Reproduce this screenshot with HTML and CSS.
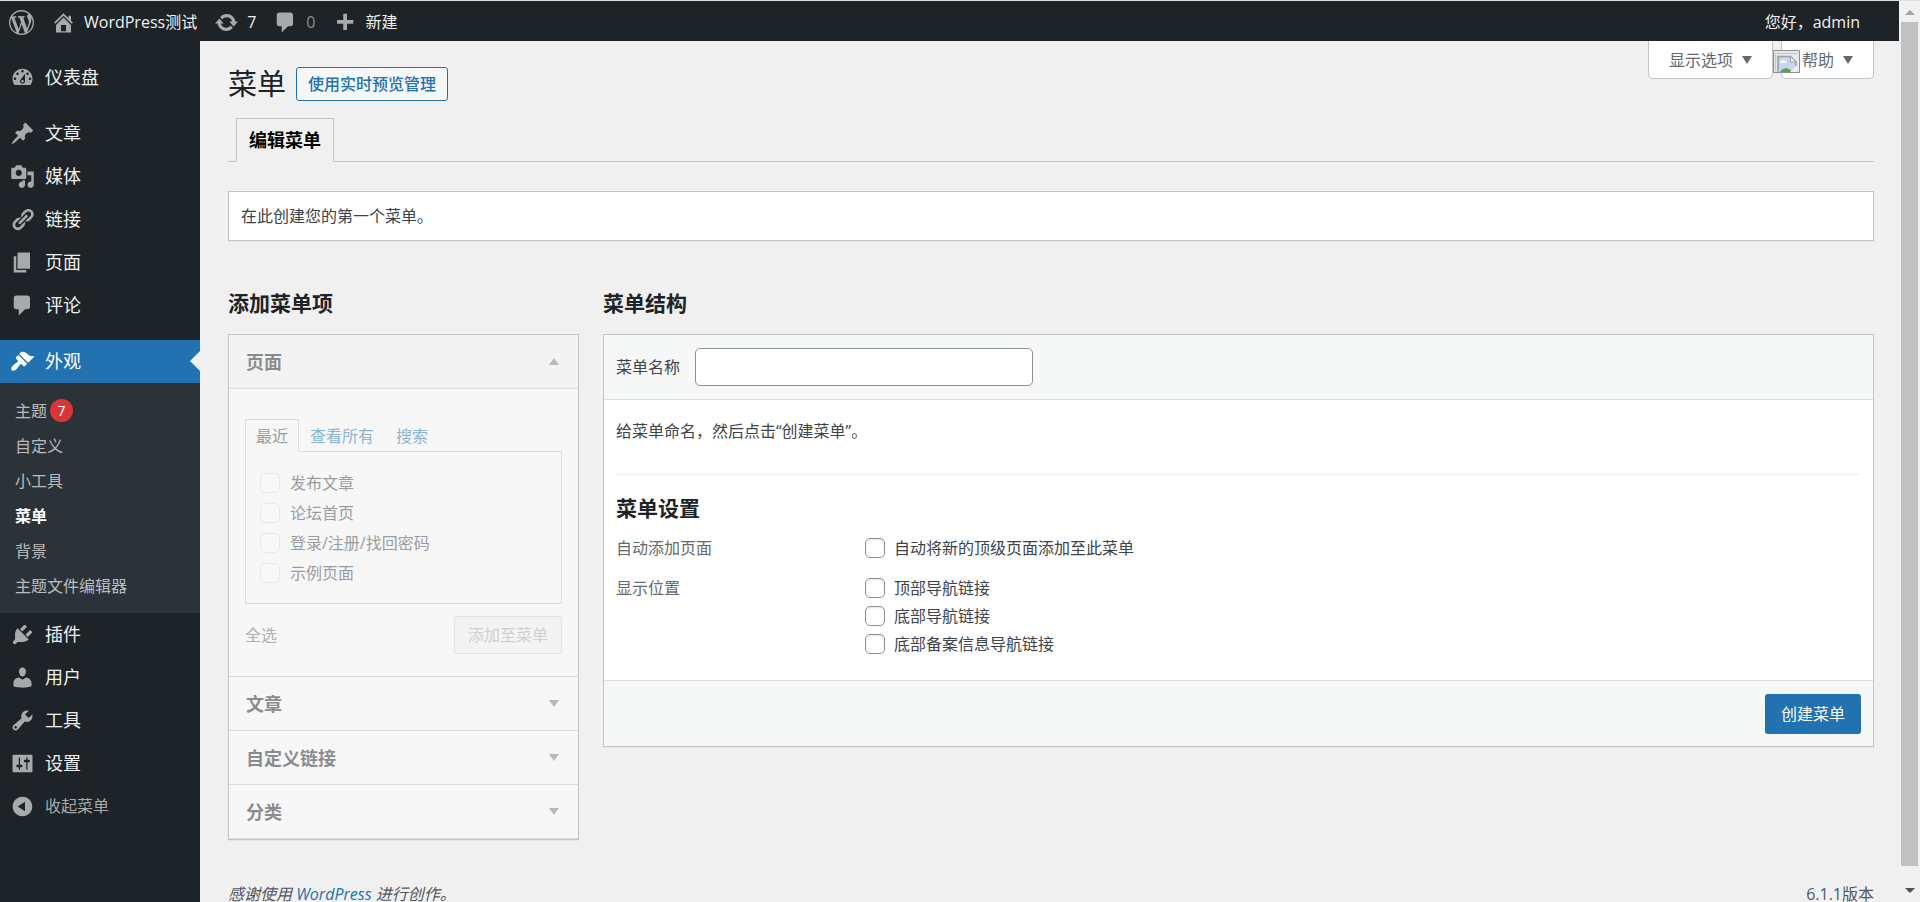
FILE: index.html
```html
<!DOCTYPE html>
<html lang="zh-CN">
  <head>
    <meta charset="UTF-8" />
    <meta name="viewport" content="width=device-width, initial-scale=1.0" />
    <title>菜单 ‹ WordPress测试 — WordPress</title>
    <link rel="stylesheet" href="styles.css">
  </head>
  <body>
    <div class="screen">
      <div class="app">
        <header class="adminbar">
          <a class="bar-logo" href="#" aria-label="WordPress">
            <svg viewBox="0 0 20 20"><path d="M20 10c0-5.51-4.49-10-10-10C4.48 0 0 4.49 0 10c0 5.52 4.48 10 10 10 5.51 0 10-4.48 10-10zM7.78 15.37L4.37 6.22c.55-.02 1.17-.08 1.17-.08.5-.06.44-1.13-.06-1.11 0 0-1.45.11-2.37.11-.18 0-.37 0-.58-.01C4.12 2.69 6.87 1.11 10 1.11c2.33 0 4.45.87 6.05 2.34-.68-.11-1.65.39-1.65 1.58 0 .74.45 1.36.9 2.1.35.61.55 1.36.55 2.46 0 1.49-1.4 5-1.4 5l-3.03-8.37c.54-.02.82-.17.82-.17.5-.05.44-1.25-.06-1.22 0 0-1.44.12-2.38.12-.87 0-2.33-.12-2.33-.12-.5-.03-.56 1.2-.06 1.22l.92.08 1.26 3.41zM17.41 10c.24-.64.74-1.87.43-4.25.7 1.29 1.05 2.71 1.05 4.25 0 3.29-1.73 6.24-4.4 7.78.97-2.59 1.94-5.2 2.92-7.78zM6.1 18.09C3.12 16.65 1.11 13.53 1.11 10c0-1.3.23-2.48.72-3.59C3.25 10.3 4.67 14.2 6.1 18.09zm4.03-6.63l2.58 6.98c-.86.29-1.76.45-2.71.45-.79 0-1.57-.11-2.29-.33.81-2.38 1.62-4.74 2.42-7.1z"/></svg>
          </a>
          <a href="#">
            <svg viewBox="0 0 20 20"><path d="M16 8.5l1.53 1.53-1.06 1.06L10 4.6l-6.47 6.49-1.06-1.06L10 2.5l4 4v-2h2v4zm-6-2.46l6 5.99V18H4v-5.97zM12 17v-5H8v5h4z"/></svg>
            <span>WordPress测试</span>
          </a>
          <a href="#">
            <svg viewBox="0 0 20 20"><path d="M10.2 3.28c3.53 0 6.43 2.61 6.92 6h2.08l-3.5 4-3.5-4h2.32c-.45-1.97-2.21-3.45-4.32-3.45-1.45 0-2.73.71-3.54 1.78L4.95 5.66C6.23 4.2 8.11 3.28 10.2 3.28zm-.4 13.44c-3.52 0-6.43-2.61-6.92-6H.8l3.5-4c1.17 1.33 2.33 2.67 3.5 4H5.48c.45 1.97 2.21 3.45 4.32 3.45 1.45 0 2.73-.71 3.54-1.78l1.71 1.95c-1.28 1.46-3.15 2.38-5.25 2.38z"/></svg>
            <span>7</span>
          </a>
          <a class="muted" href="#">
            <svg viewBox="0 0 20 20"><path d="M5 2h9c1.1 0 2 .9 2 2v7c0 1.1-.9 2-2 2h-2l-5 5v-5H5c-1.1 0-2-.9-2-2V4c0-1.1.9-2 2-2z"/></svg>
            <span>0</span>
          </a>
          <a href="#">
            <svg viewBox="0 0 20 20"><path d="M17 8v3h-5v5H9v-5H4V8h5V3h3v5h5z"/></svg>
            <span>新建</span>
          </a>
          <a class="account" href="#">您好，admin</a>
        </header>

        <div class="columns">
          <nav class="sidebar">
            <ul class="menu">
              <li>
                <a href="#"><svg viewBox="0 0 20 20"><path d="M3.76 16h12.48c1.1-1.37 1.76-3.11 1.76-5 0-4.42-3.58-8-8-8s-8 3.58-8 8c0 1.89.66 3.63 1.76 5zM10 4c.55 0 1 .45 1 1s-.45 1-1 1-1-.45-1-1 .45-1 1-1zM6 6c.55 0 1 .45 1 1s-.45 1-1 1-1-.45-1-1 .45-1 1-1zm8 0c.55 0 1 .45 1 1s-.45 1-1 1-1-.45-1-1 .45-1 1-1zm-5.37 5.55L12 7v6c0 1.1-.9 2-2 2s-2-.9-2-2c0-.57.24-1.08.63-1.45zM4 10c.55 0 1 .45 1 1s-.45 1-1 1-1-.45-1-1 .45-1 1-1zm12 0c.55 0 1 .45 1 1s-.45 1-1 1-1-.45-1-1 .45-1 1-1zm-5 3c0-.55-.45-1-1-1s-1 .45-1 1 .45 1 1 1 1-.45 1-1z"/></svg>仪表盘</a>
              </li>
              <li class="group">
                <a href="#"><svg viewBox="0 0 20 20"><path d="M10.44 3.02l1.82-1.82 6.36 6.35-1.83 1.82c-1.05-.68-2.48-.57-3.41.36l-.75.75c-.92.93-1.04 2.35-.35 3.41l-1.83 1.82-2.41-2.41-2.8 2.79c-.42.42-3.38 2.71-3.8 2.29s1.86-3.39 2.28-3.81l2.79-2.79L4.1 9.36l1.83-1.82c1.05.69 2.48.57 3.4-.36l.75-.75c.93-.92 1.05-2.35.36-3.41z"/></svg>文章</a>
              </li>
              <li>
                <a href="#"><svg viewBox="0 0 20 20"><path d="M13 11V4c0-.55-.45-1-1-1h-1.67L9 1H5L3.67 3H2c-.55 0-1 .45-1 1v7c0 .55.45 1 1 1h10c.55 0 1-.45 1-1zM7 4.5c1.38 0 2.5 1.12 2.5 2.5S8.38 9.5 7 9.5 4.5 8.38 4.5 7 5.62 4.5 7 4.5zM14 6h5v10.5c0 1.38-1.12 2.5-2.5 2.5S14 17.88 14 16.5s1.12-2.5 2.5-2.5c.17 0 .34.02.5.05V9h-3V6zm-4 8.05V13h2v3.5c0 1.38-1.12 2.5-2.5 2.5S7 17.88 7 16.5 8.12 14 9.5 14c.17 0 .34.02.5.05z"/></svg>媒体</a>
              </li>
              <li>
                <a href="#"><svg viewBox="0 0 20 20"><path d="M17.74 2.76c1.68 1.69 1.68 4.41 0 6.1l-1.53 1.52c-1.12 1.12-2.7 1.47-4.14 1.09l2.62-2.61.76-.77.76-.76c.84-.84.84-2.2 0-3.04-.84-.85-2.2-.85-3.04 0l-.77.76-3.38 3.38c-.37-1.44-.02-3.02 1.1-4.14l1.52-1.53c1.69-1.68 4.42-1.68 6.1 0zM8.59 13.43l5.34-5.34c.42-.42.42-1.1 0-1.52-.44-.43-1.13-.39-1.53 0l-5.33 5.34c-.42.42-.42 1.1 0 1.52.44.43 1.13.39 1.52 0zm-.76 2.29l4.14-4.15c.38 1.44.03 3.02-1.09 4.14l-1.52 1.53c-1.69 1.68-4.41 1.68-6.1 0-1.68-1.68-1.68-4.42 0-6.1l1.53-1.52c1.12-1.12 2.7-1.47 4.14-1.1l-4.14 4.15c-.85.84-.85 2.2 0 3.05.84.84 2.2.84 3.04 0z"/></svg>链接</a>
              </li>
              <li>
                <a href="#"><svg viewBox="0 0 20 20"><path d="M6 15V2h10v13H6zm-1 1h8v2H3V5h2v11z"/></svg>页面</a>
              </li>
              <li>
                <a href="#"><svg viewBox="0 0 20 20"><path d="M5 2h9c1.1 0 2 .9 2 2v7c0 1.1-.9 2-2 2h-2l-5 5v-5H5c-1.1 0-2-.9-2-2V4c0-1.1.9-2 2-2z"/></svg>评论</a>
              </li>
              <li class="group current">
                <a href="#"><svg viewBox="0 0 20 20"><path d="M14.48 11.06L7.41 3.99l1.5-1.5c.5-.56 2.3-.47 3.51.32 1.21.8 1.43 1.28 2.91 2.1 1.18.64 2.45 1.26 4.45.85zm-.71.71L6.7 4.7 4.93 6.47c-.39.39-.39 1.02 0 1.41l1.06 1.06c.39.39.39 1.03 0 1.42-.6.6-1.43 1.11-2.21 1.69-.35.26-.7.53-1.01.84C1.43 14.23.4 16.08 1.4 17.07c.99 1 2.84-.03 4.18-1.36.31-.31.58-.66.85-1.02.57-.78 1.08-1.61 1.69-2.21.39-.39 1.02-.39 1.41 0l1.06 1.06c.39.39 1.02.39 1.41 0z"/></svg>外观</a>
                <ul class="submenu">
                  <li><a href="#">主题 <span class="count">7</span></a></li>
                  <li><a href="#">自定义</a></li>
                  <li><a href="#">小工具</a></li>
                  <li><a class="active" href="#">菜单</a></li>
                  <li><a href="#">背景</a></li>
                  <li><a href="#">主题文件编辑器</a></li>
                </ul>
              </li>
              <li>
                <a href="#"><svg viewBox="0 0 20 20"><path d="M13.11 4.36L9.87 7.6 8 5.73l3.24-3.24c.35-.34 1.05-.2 1.56.32.52.51.66 1.21.31 1.55zm-8 1.77l.91-1.12 9.01 9.01-1.19.84c-.71.71-2.63 1.16-3.82 1.16H6.14L4.9 17.26c-.59.59-1.54.59-2.12 0-.59-.58-.59-1.53 0-2.12l1.24-1.24v-3.88c0-1.13.4-3.19 1.09-3.89zm7.26 3.97l3.24-3.24c.34-.35 1.04-.21 1.55.31.52.51.66 1.21.31 1.55l-3.24 3.25z"/></svg>插件</a>
              </li>
              <li>
                <a href="#"><svg viewBox="0 0 20 20"><path d="M10 9.25c-2.27 0-2.73-3.44-2.73-3.44C7 4.02 7.82 2 9.97 2c2.16 0 2.98 2.02 2.71 3.81 0 0-.41 3.44-2.68 3.44zm0 2.57L12.72 10c2.39 0 4.52 2.33 4.52 4.53v2.49s-3.65 1.13-7.24 1.13c-3.65 0-7.24-1.13-7.24-1.13v-2.49c0-2.25 1.94-4.48 4.47-4.48z"/></svg>用户</a>
              </li>
              <li>
                <a href="#"><svg viewBox="0 0 20 20"><path d="M16.68 9.77c-1.34 1.34-3.3 1.67-4.95.99l-5.41 6.52c-.99.99-2.59.99-3.58 0s-.99-2.59 0-3.57l6.52-5.42c-.68-1.65-.35-3.61.99-4.95 1.28-1.28 3.12-1.62 4.72-1.06l-2.89 2.89 2.82 2.82 2.86-2.87c.53 1.58.18 3.39-1.08 4.65zM3.81 16.21c.4.39 1.04.39 1.43 0 .4-.4.4-1.04 0-1.43-.39-.4-1.03-.4-1.43 0-.39.39-.39 1.03 0 1.43z"/></svg>工具</a>
              </li>
              <li>
                <a href="#"><svg viewBox="0 0 20 20"><path d="M18 16V4c0-.55-.45-1-1-1H3c-.55 0-1 .45-1 1v12c0 .55.45 1 1 1h14c.55 0 1-.45 1-1zM8 11h1c.55 0 1 .45 1 1s-.45 1-1 1H8v1.5c0 .28-.22.5-.5.5s-.5-.22-.5-.5V13H6c-.55 0-1-.45-1-1s.45-1 1-1h1V5.5c0-.28.22-.5.5-.5s.5.22.5.5V11zm5-2h-1c-.55 0-1-.45-1-1s.45-1 1-1h1V5.5c0-.28.22-.5.5-.5s.5.22.5.5V7h1c.55 0 1 .45 1 1s-.45 1-1 1h-1v5.5c0 .28-.22.5-.5.5s-.5-.22-.5-.5V9z"/></svg>设置</a>
              </li>
              <li>
                <button class="collapse" type="button"><svg viewBox="0 0 20 20"><path d="M10 2.16c4.33 0 7.84 3.51 7.84 7.84s-3.51 7.84-7.84 7.84S2.16 14.33 2.16 10 5.71 2.16 10 2.16zm2 11.72V6.12L6.18 9.97z"/></svg>收起菜单</button>
              </li>
            </ul>
          </nav>

          <main class="content">
            <div class="screen-meta">
              <button type="button">显示选项</button>
              <button class="help" type="button">
                <svg class="broken" viewBox="0 0 27 23">
                  <path fill="#e8e8e8" d="M0 0h27v23H0z"/>
                  <path fill="none" stroke="#8c8f94" d="M.5 22.500V.5h26v22z"/>
                  <path fill="none" stroke="#c3c4c7" d="M2.500 21V3.500h22"/>
                  <path fill="#c6d5f5" stroke="#9a9da3" stroke-width="1.500" d="M5 22V6.500h12.500L23 12v10"/>
                  <path fill="#fff" stroke="#9a9da3" d="M17.500 6.500V12H23z"/>
                  <path fill="#fff" d="M7 13c0-2 1-2 2-2 1-2 3-1 3 0 2 0 2 2 1 2z"/>
                  <path fill="#55aa35" d="M7 22c3-5 9-5 12 0z"/>
                  <path fill="#f0f0f1" d="M17 22l7-7v7z"/>
                </svg>
                帮助
              </button>
            </div>

            <div class="title">
              <h1>菜单</h1>
              <a class="title-action" href="#">使用实时预览管理</a>
            </div>

            <nav class="tabs">
              <a href="#">编辑菜单</a>
            </nav>

            <p class="notice">在此创建您的第一个菜单。</p>

            <div class="frame">
              <section>
                <h2>添加菜单项</h2>
                <div class="accordion">
                  <div class="faded">
                    <h3 class="open">页面</h3>
                    <div class="pages">
                      <div class="page-tabs">
                        <a class="selected" href="#">最近</a>
                        <a href="#">查看所有</a>
                        <a href="#">搜索</a>
                      </div>
                      <div class="page-list">
                        <label><input type="checkbox" disabled />发布文章</label>
                        <label><input type="checkbox" disabled />论坛首页</label>
                        <label><input type="checkbox" disabled />登录/注册/找回密码</label>
                        <label><input type="checkbox" disabled />示例页面</label>
                      </div>
                      <div class="page-actions">
                        <a href="#">全选</a>
                        <button type="button" disabled>添加至菜单</button>
                      </div>
                    </div>
                    <h3>文章</h3>
                    <h3>自定义链接</h3>
                    <h3>分类</h3>
                  </div>
                </div>
              </section>

              <section>
                <h2>菜单结构</h2>
                <form class="editor">
                  <div class="editor-head">
                    <label for="menu-name">菜单名称</label>
                    <input type="text" id="menu-name" />
                  </div>
                  <div class="editor-body">
                    <p>给菜单命名，然后点击“创建菜单”。</p>
                    <div class="settings">
                      <h2>菜单设置</h2>
                      <fieldset>
                        <legend>自动添加页面</legend>
                        <label><input type="checkbox" />自动将新的顶级页面添加至此菜单</label>
                      </fieldset>
                      <fieldset>
                        <legend>显示位置</legend>
                        <label><input type="checkbox" />顶部导航链接</label>
                        <label><input type="checkbox" />底部导航链接</label>
                        <label><input type="checkbox" />底部备案信息导航链接</label>
                      </fieldset>
                    </div>
                  </div>
                  <div class="editor-foot">
                    <button type="submit">创建菜单</button>
                  </div>
                </form>
              </section>
            </div>

            <footer>
              <em>感谢使用 <a href="#">WordPress</a> 进行创作。</em>
              <span>6.1.1版本</span>
            </footer>
          </main>
        </div>
      </div>

      <div class="scrollbar">
        <span class="up"></span>
        <span class="thumb"></span>
        <span class="down"></span>
      </div>
    </div>
  </body>
</html>
```
FILE: styles.css
```css
* {
  margin: 0;
  padding: 0;
  box-sizing: border-box;
}

body {
  background-color: #f0f0f0;
  color: #3c434a;
  font-family: "Open Sans", "Noto Sans CJK SC", sans-serif;
  font-size: 16px;
  line-height: 24px;
}

a {
  color: #2271b1;
  text-decoration: none;
}

ul {
  list-style: none;
}

button,
input {
  font: inherit;
}

svg {
  fill: #a7aaad;
  flex: none;
}

.screen {
  display: flex;
  height: 100vh;
  overflow: hidden;
  border-top: 1px solid #dcdede;
}

.app {
  flex: 1;
  min-width: 0;
  display: flex;
  flex-direction: column;
}

/* top bar */
.adminbar {
  flex: none;
  display: flex;
  align-items: center;
  gap: 17px;
  height: 40px;
  padding: 2px 39px 0 9px;
  background: #1d2327;
}

.adminbar a {
  display: flex;
  align-items: center;
  gap: 8px;
  color: #f0f0f1;
}

.adminbar svg {
  width: 25px;
  height: 25px;
}

.adminbar .muted {
  color: #8c8f94;
}

.adminbar .account {
  margin-left: auto;
}

.columns {
  flex: 1;
  min-height: 0;
  display: flex;
}

/* side menu */
.sidebar {
  flex: none;
  width: 200px;
  padding-top: 15px;
  background: #1d2327;
}

.menu > li > a,
.collapse {
  display: flex;
  align-items: center;
  gap: 10px;
  width: 100%;
  height: 43px;
  padding: 0 0 1px 10px;
  color: #f0f0f1;
  font-size: 18px;
}

.menu svg {
  width: 25px;
  height: 25px;
}

.menu .group {
  margin-top: 13px;
}

.menu .current > a {
  position: relative;
  background: #2271b1;
  color: #fff;
}

.menu .current > a svg {
  fill: #fff;
}

.menu .current > a::after {
  content: "";
  position: absolute;
  right: 0;
  top: 11px;
  border: 10px solid transparent;
  border-right-color: #f0f0f0;
  border-left: 0;
}

.menu .collapse {
  background: none;
  border: none;
  color: #a7aaad;
  font-size: 16px;
  cursor: pointer;
}

.submenu {
  padding: 10px 0;
  background: #2c3338;
}

.submenu a {
  display: flex;
  align-items: center;
  gap: 3px;
  height: 35px;
  padding-left: 15px;
  color: #b9bcbe;
}

.submenu .active {
  color: #fff;
  font-weight: bold;
}

.count {
  width: 23px;
  height: 23px;
  border-radius: 50%;
  background: #d63638;
  color: #fff;
  font-size: 14px;
  line-height: 23px;
  text-align: center;
}

/* content */
.content {
  flex: 1;
  min-width: 0;
  position: relative;
  padding: 24px 25px 0 28px;
}

.screen-meta {
  position: absolute;
  top: 0;
  right: 25px;
  display: flex;
  gap: 8px;
}

.screen-meta button {
  display: flex;
  align-items: center;
  gap: 9px;
  height: 38px;
  padding: 0 20px;
  background: #fff;
  border: 1px solid #c3c4c7;
  border-top: none;
  border-radius: 0 0 5px 5px;
  color: #646970;
}

.screen-meta button::after {
  content: "";
  border: 5px solid transparent;
  border-top: 8px solid #646970;
  border-bottom: 0;
}

.screen-meta .help {
  position: relative;
}

.screen-meta .broken {
  position: absolute;
  left: -9px;
  top: 9px;
  width: 27px;
  height: 23px;
}

.title {
  display: flex;
  align-items: center;
  gap: 10px;
  height: 38px;
}

h1 {
  color: #1d2327;
  font-size: 29px;
  font-weight: normal;
  line-height: 36px;
}

.title-action {
  padding: 4px 11px;
  background: #f6f7f7;
  border: 1px solid #2271b1;
  border-radius: 3px;
  font-weight: 500;
}

.tabs {
  display: flex;
  margin-top: 15px;
  padding-left: 8px;
  border-bottom: 1px solid #c3c4c7;
}

.tabs a {
  margin-bottom: -1px;
  padding: 9px 12px;
  border: 1px solid #c3c4c7;
  border-bottom-color: #f0f0f0;
  color: #000;
  font-size: 18px;
  font-weight: bold;
}

.notice {
  margin-top: 29px;
  padding: 12px;
  background: #fff;
  border: 1px solid #c3c4c7;
  box-shadow: 0 1px 1px rgba(0, 0, 0, 0.04);
}

.frame {
  display: grid;
  grid-template-columns: 351px 1fr;
  align-items: start;
  gap: 24px;
  margin-top: 48px;
}

h2 {
  color: #1d2327;
  font-size: 21px;
  line-height: 28px;
}

/* add menu items, greyed out until a menu exists */
.accordion {
  margin-top: 17px;
  border: 1px solid #c3c4c7;
  background: #f7f7f7;
  box-shadow: 0 1px 1px rgba(0, 0, 0, 0.04);
}

.faded {
  opacity: 0.5;
}

.accordion h3 {
  display: flex;
  align-items: center;
  justify-content: space-between;
  height: 54px;
  padding: 0 19px 0 17px;
  border-bottom: 1px solid #c3c4c7;
  color: #1d2327;
  font-size: 18px;
}

.accordion h3::after {
  content: "";
  border: 5px solid transparent;
  border-top: 7px solid #787c82;
  border-bottom: 0;
}

.accordion .open {
  background: #f0f0f0;
}

.accordion .open::after {
  border: 5px solid transparent;
  border-bottom: 7px solid #787c82;
  border-top: 0;
}

.pages {
  padding: 30px 16px 22px;
  border-bottom: 1px solid #c3c4c7;
}

.page-tabs {
  display: flex;
}

.page-tabs a {
  padding: 4px 10px 3px;
  border: 1px solid transparent;
  border-bottom: 0;
}

.page-tabs .selected {
  margin-bottom: -1px;
  padding-bottom: 4px;
  background: #f7f7f7;
  border-color: #c3c4c7;
  color: #3c434a;
}

.page-list {
  padding: 16px 14px 15px;
  border: 1px solid #c3c4c7;
}

.page-list label {
  display: flex;
  align-items: center;
  gap: 10px;
  height: 30px;
}

input[type="checkbox"] {
  appearance: none;
  width: 20px;
  height: 20px;
  background: #fff;
  border: 1px solid #8c8f94;
  border-radius: 5px;
  box-shadow: inset 0 1px 2px rgba(0, 0, 0, 0.1);
}

input[type="checkbox"]:disabled {
  background: #fafafa;
  border-color: #dcdcde;
  box-shadow: none;
}

.page-actions {
  display: flex;
  align-items: center;
  justify-content: space-between;
  margin-top: 12px;
}

.page-actions a {
  color: #646970;
}

.page-actions button {
  height: 38px;
  padding: 0 13px;
  background: #f0f0f1;
  border: 1px solid #cfd0d2;
  border-radius: 3px;
  color: #a7aaad;
}

/* menu editor */
.editor {
  margin-top: 17px;
  background: #fff;
  border: 1px solid #c3c4c7;
  box-shadow: 0 1px 1px rgba(0, 0, 0, 0.04);
}

.editor-head,
.editor-foot {
  display: flex;
  align-items: center;
  background: #f6f7f7;
  padding: 0 12px;
}

.editor-head {
  gap: 15px;
  height: 65px;
  border-bottom: 1px solid #dcdcde;
}

.editor-head input {
  width: 338px;
  height: 38px;
  padding: 0 10px;
  background: #fff;
  border: 1px solid #8c8f94;
  border-radius: 5px;
}

.editor-body {
  padding: 19px 12px 22px;
}

.settings {
  margin-top: 31px;
  padding-top: 19px;
  border-top: 1px solid #f0f0f1;
}

fieldset {
  position: relative;
  display: flex;
  flex-direction: column;
  padding-left: 249px;
  border: none;
}

.settings h2 {
  margin-bottom: 12px;
}

fieldset + fieldset {
  margin-top: 12px;
}

/* the legend sits in the left gutter of its fieldset */
legend {
  position: absolute;
  left: 0;
  top: 0;
  line-height: 28px;
  color: #646970;
}

fieldset label {
  display: flex;
  align-items: center;
  gap: 9px;
  height: 28px;
}

.editor-foot {
  justify-content: flex-end;
  height: 66px;
  border-top: 1px solid #dcdcde;
}

.editor-foot button {
  height: 40px;
  padding: 0 16px;
  background: #2271b1;
  border: none;
  border-radius: 3px;
  color: #fff;
  cursor: pointer;
}

footer {
  display: flex;
  justify-content: space-between;
  margin-top: 42px;
  color: #50575e;
}

/* window scrollbar */
.scrollbar {
  flex: none;
  display: flex;
  flex-direction: column;
  align-items: center;
  width: 21px;
  padding: 9px 0;
  background: #f1f1f1;
}

.scrollbar .up,
.scrollbar .down {
  border: 5px solid transparent;
}

.scrollbar .up {
  border-top: 0;
  border-bottom-color: #a3a3a3;
}

.scrollbar .down {
  border-bottom: 0;
  border-top-color: #505050;
}

.scrollbar .thumb {
  flex: 1;
  width: 17px;
  margin: 7px 0 22px;
  background: #c1c1c1;
}
```
